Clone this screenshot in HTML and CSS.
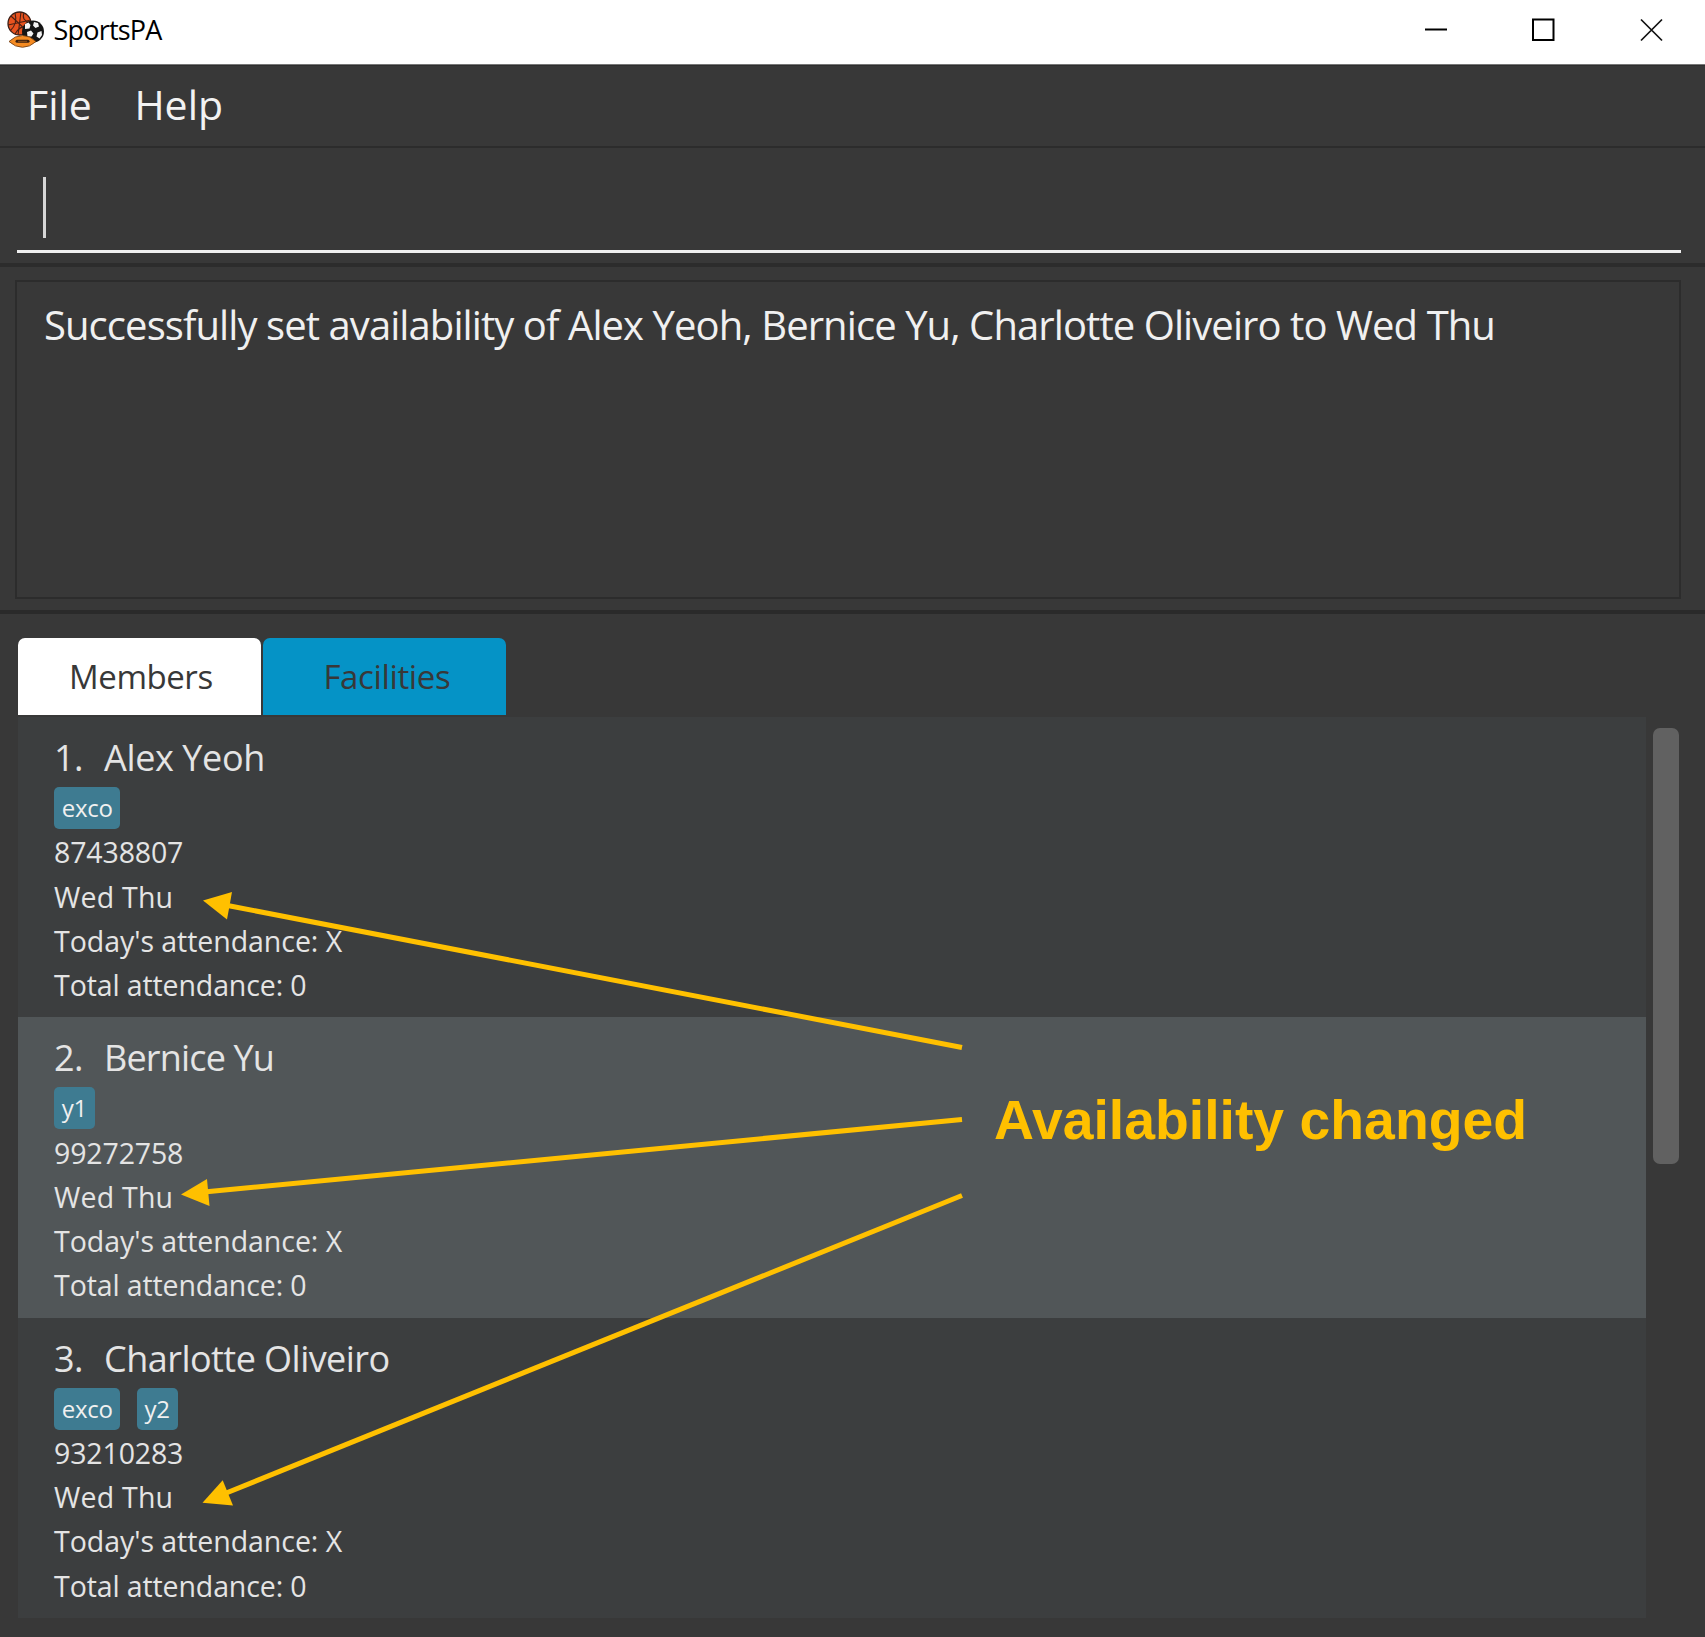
FILE: index.html
```
<!DOCTYPE html>
<html lang="en">
<head>
<meta charset="utf-8">
<title>SportsPA</title>
<link rel="stylesheet" href="styles.css">
</head>
<body>
<div class="window">
  <header class="titlebar">
    <svg class="logo" width="38" height="38" viewBox="0 0 38 38">
      <circle cx="12.500" cy="12.500" r="11.500" fill="#e8531f" stroke="#3a2018" stroke-width="1.300"/>
      <path d="M4 5 21 21M14 1 11 24M1 14 24 9M3 20Q11 13 8 2M8 23Q13 14 23 15M17 2Q14 9 23 12" fill="none" stroke="#4a2014" stroke-width="1.100"/>
      <circle cx="26" cy="20.500" r="11" fill="#151515"/>
      <path d="M18 13l3.500-1.500 2 2.500-1 3.500-4.500.5zM27 11l4 1 1 3.500-3.500 1.500-2.500-2.500zM20 21l4-1.500 2.500 3-2 3-4 0zM30.500 21.500l4-1.500.5 4-2.500 3.500-3-2z" fill="#f4f4f4"/>
      <path d="M2 30.500Q8 24.500 15.500 24.500 23 24.500 29 30.500 23 36.300 15.500 36.300 8 36.300 2 30.500z" fill="#f58b22" stroke="#6a3a14" stroke-width=".8"/>
      <path d="M10 30.300H21" stroke="#3a2010" stroke-width="3" stroke-linecap="round"/>
      <path d="M11 30.300H20" stroke="#a85f1c" stroke-width=".8"/>
    </svg>
    <span class="app-name">SportsPA</span>
    <div class="controls">
      <svg width="24" height="24" viewBox="0 0 24 24"><path d="M2 11.500H24" stroke="#000" stroke-width="2"/></svg>
      <svg width="24" height="24" viewBox="0 0 24 24"><rect x="2" y="1.500" width="20.500" height="20.500" fill="none" stroke="#000" stroke-width="2"/></svg>
      <svg width="24" height="24" viewBox="0 0 24 24"><path d="M2 1.500 23 22.500M23 1.500 2 22.500" stroke="#111" stroke-width="1.700"/></svg>
    </div>
  </header>
  <nav class="menubar"><span class="menu-file">File</span><span class="menu-help">Help</span></nav>
  <section class="command"><div class="field"><span class="caret"></span></div></section>
  <section class="result"><div class="result-box"><span class="result-text">Successfully set availability of Alex Yeoh, Bernice Yu, Charlotte Oliveiro to Wed Thu</span></div></section>
  <main class="content">
    <div class="tabs"><div class="tab active">Members</div><div class="tab facilities">Facilities</div></div>
    <div class="list-area">
      <div class="list">
        <article class="card">
          <h2 class="name"><span class="index">1.</span><span class="loose">Alex Yeoh</span></h2>
          <div class="tags"><span class="tag">exco</span></div>
          <p class="num">87438807</p><p class="days">Wed Thu</p><p>Today's attendance: X</p><p class="total">Total attendance: 0</p>
        </article>
        <article class="card alt">
          <h2 class="name"><span class="index">2.</span><span class="tight">Bernice Yu</span></h2>
          <div class="tags"><span class="tag">y1</span></div>
          <p class="num">99272758</p><p class="days">Wed Thu</p><p>Today's attendance: X</p><p class="total">Total attendance: 0</p>
        </article>
        <article class="card">
          <h2 class="name"><span class="index">3.</span><span>Charlotte Oliveiro</span></h2>
          <div class="tags"><span class="tag">exco</span><span class="tag">y2</span></div>
          <p class="num">93210283</p><p class="days">Wed Thu</p><p>Today's attendance: X</p><p class="total">Total attendance: 0</p>
        </article>
      </div>
      <div class="scrollbar"><div class="thumb"></div></div>
    </div>
  </main>
  <svg class="arrows" width="1705" height="1637" viewBox="0 0 1705 1637">
    <g stroke="#ffc000" stroke-width="5">
      <path d="M962 1047.500 225 905"/><path d="M962 1119.500 204 1192"/><path d="M962 1195.500 225 1493.500"/>
    </g>
    <g fill="#ffc000">
      <path d="M203 900.500 232 892 227 919.500z"/><path d="M181 1194.500 207 1179 209.500 1206z"/><path d="M202.500 1502.700 222.700 1480.300 233 1505.500z"/>
    </g>
  </svg>
  <div class="callout">Availability changed</div>
</div>
</body>
</html>
```
FILE: styles.css
```
* { box-sizing: border-box; }
body { margin: 0; background: #383838; font-family: "Open Sans", "Noto Sans", sans-serif; color: #e4e4e4; }
.window { position: relative; width: 1705px; height: 1637px; display: flex; flex-direction: column; overflow: hidden; background: #383838; white-space: nowrap; }
.titlebar { height: 65px; background: #fff; border-bottom: 1px solid #777; display: flex; align-items: center; padding: 0 42px 4px 7px; color: #000; }
.app-name { margin-left: 8.500px; font-size: 27px; line-height: 40px; letter-spacing: -0.8px; }
.controls { margin-left: auto; display: flex; gap: 84px; }
.controls svg { display: block; }
.menubar { height: 81px; border-top: 1px solid #2e2e2e; display: flex; align-items: center; padding: 0 0 4px 27px; font-size: 41px; line-height: 60px; color: #f2f2f2; }
.menu-help { margin-left: 42.500px; }
.command { height: 121px; border-top: 2px solid #2c2c2c; border-bottom: 4px solid #2c2c2c; padding: 12px 24px 10px 17px; }
.field { height: 93px; border-bottom: 3px solid #f0f0f0; padding: 17px 0 0 26px; }
.caret { display: block; width: 3px; height: 61px; background: #d6d6d6; }
.result { height: 347px; border-bottom: 4px solid #2a2a2a; padding: 13px 24px 14px 15px; }
.result-box { height: 319px; border: 2px solid #2c2c2c; padding: 13px 27px; font-size: 40px; line-height: 60px; color: #f0f0f0; }
.result-text { letter-spacing: -0.920px; }
.content { padding: 24px 24px 0 18.400px; }
.tabs { display: flex; gap: 2px; height: 79px; padding-bottom: 2px; }
.tab { width: 243px; height: 77px; padding-left: 2px; border-radius: 7px 7px 0 0; background: #0593c6; color: #383838; font-size: 33px; line-height: 78px; letter-spacing: -0.450px; text-align: center; }
.tab.active { background: #fff; }
.tab.facilities { padding-left: 4px; letter-spacing: -0.350px; }
.list-area { display: flex; }
.list { width: 1627.700px; }
.card { height: 300.400px; background: #3c3e3f; padding: 14px 35.700px 0; }
.card.alt { background: #515658; }
.name { margin: 0; display: flex; font-weight: 400; font-size: 36px; line-height: 54px; letter-spacing: -0.540px; }
.name .loose { letter-spacing: -0.400px; }
.name .tight { letter-spacing: -0.840px; }
.index { width: 50px; }
.tags { display: flex; gap: 16.500px; height: 44px; margin-bottom: 1.300px; padding-top: 2px; }
.tag { height: 42px; padding: 0 7.600px; border-radius: 5px; background: #3e7b91; font-size: 24px; line-height: 41px; letter-spacing: -0.200px; color: #f0f0f0; }
.card p { margin: 0; font-size: 28.500px; line-height: 44.200px; letter-spacing: -0.050px; }
.card .num { letter-spacing: -0.150px; }
.card .days { letter-spacing: 0.200px; }
.card .total { letter-spacing: -0.120px; }
.scrollbar { padding: 11px 0 0 7px; }
.thumb { width: 26px; height: 436px; border-radius: 7px; background: #616161; }
.arrows { position: absolute; left: 0; top: 0; }
.callout { position: absolute; left: 994px; top: 1088px; font: bold 55.350px/64px "Liberation Sans", Arial, sans-serif; color: #ffc000; }
```
